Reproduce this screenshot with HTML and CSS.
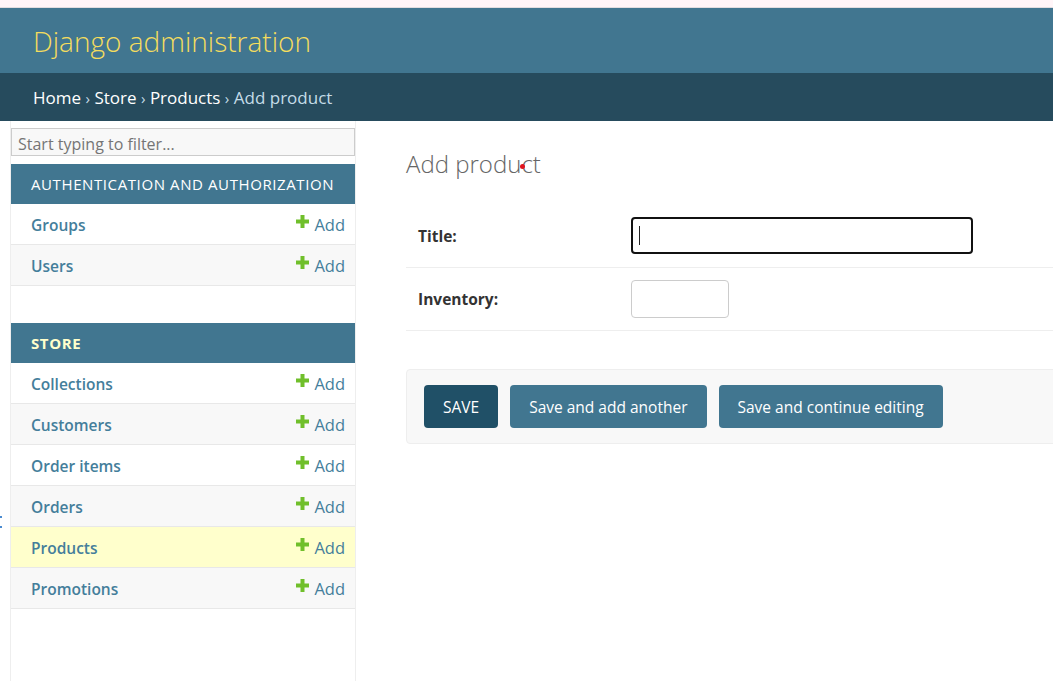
FILE: index.html
```html
<!DOCTYPE html>
<html lang="en">
<head>
<meta charset="utf-8">
<title>Add product | Django site admin</title>
<link rel="stylesheet" href="styles.css">
</head>
<body>
<div class="topstrip"></div>
<header class="header">
  <div class="branding">Django administration</div>
</header>
<nav class="breadcrumbs">
  <a href="#">Home</a> <span class="sep">›</span> <a href="#">Store</a> <span class="sep">›</span> <a href="#">Products</a> <span class="sep">›</span> <span class="current">Add product</span>
</nav>
<div class="main">
  <div class="toggle"><svg class="toggle-glyph" viewBox="0 0 4 14"><rect x="0" y="0" width="2" height="2"/><rect x="0" y="10" width="2" height="2"/></svg></div>
  <aside class="sidebar">
    <input class="nav-filter" type="search" placeholder="Start typing to filter...">
    <section class="module">
      <div class="caption">Authentication and Authorization</div>
      <div class="row row-a"><a class="model" href="#">Groups</a><a class="addlink" href="#"><svg class="plus" viewBox="0 0 13 13"><path d="M4.5 0h4v4.5h4.5v4h-4.5v4.5h-4v-4.5h-4.5v-4h4.5z"/></svg>Add</a></div>
      <div class="row row-b"><a class="model" href="#">Users</a><a class="addlink" href="#"><svg class="plus" viewBox="0 0 13 13"><path d="M4.5 0h4v4.5h4.5v4h-4.5v4.5h-4v-4.5h-4.5v-4h4.5z"/></svg>Add</a></div>
    </section>
    <section class="module current-app">
      <div class="caption">Store</div>
      <div class="row row-a"><a class="model" href="#">Collections</a><a class="addlink" href="#"><svg class="plus" viewBox="0 0 13 13"><path d="M4.5 0h4v4.5h4.5v4h-4.5v4.5h-4v-4.5h-4.5v-4h4.5z"/></svg>Add</a></div>
      <div class="row row-b"><a class="model" href="#">Customers</a><a class="addlink" href="#"><svg class="plus" viewBox="0 0 13 13"><path d="M4.5 0h4v4.5h4.5v4h-4.5v4.5h-4v-4.5h-4.5v-4h4.5z"/></svg>Add</a></div>
      <div class="row row-a"><a class="model" href="#">Order items</a><a class="addlink" href="#"><svg class="plus" viewBox="0 0 13 13"><path d="M4.5 0h4v4.5h4.5v4h-4.5v4.5h-4v-4.5h-4.5v-4h4.5z"/></svg>Add</a></div>
      <div class="row row-b"><a class="model" href="#">Orders</a><a class="addlink" href="#"><svg class="plus" viewBox="0 0 13 13"><path d="M4.5 0h4v4.5h4.5v4h-4.5v4.5h-4v-4.5h-4.5v-4h4.5z"/></svg>Add</a></div>
      <div class="row row-current"><a class="model" href="#">Products</a><a class="addlink" href="#"><svg class="plus" viewBox="0 0 13 13"><path d="M4.5 0h4v4.5h4.5v4h-4.5v4.5h-4v-4.5h-4.5v-4h4.5z"/></svg>Add</a></div>
      <div class="row row-b"><a class="model" href="#">Promotions</a><a class="addlink" href="#"><svg class="plus" viewBox="0 0 13 13"><path d="M4.5 0h4v4.5h4.5v4h-4.5v4.5h-4v-4.5h-4.5v-4h4.5z"/></svg>Add</a></div>
    </section>
  </aside>
  <main class="content">
    <h1 class="title">Add produ<span class="cursor-dot-wrap">c<span class="cursor-dot"></span></span>t</h1>
    <form class="form">
      <div class="form-row">
        <label class="required" for="id_title">Title:</label>
        <div class="field">
          <input class="input input-title" id="id_title" type="text">
          <span class="caret"></span>
        </div>
      </div>
      <div class="form-row">
        <label class="required" for="id_inventory">Inventory:</label>
        <input class="input input-inventory" id="id_inventory" type="text">
      </div>
      <div class="submit-row">
        <button class="btn btn-default" type="button">SAVE</button>
        <button class="btn" type="button">Save and add another</button>
        <button class="btn" type="button">Save and continue editing</button>
      </div>
    </form>
  </main>
</div>
</body>
</html>
```
FILE: styles.css
```css
* { box-sizing: border-box; }
html, body { margin: 0; padding: 0; }
body {
  width: 1053px;
  height: 681px;
  overflow: hidden;
  background: #fff;
  font-family: "Open Sans", "Noto Sans", sans-serif;
  color: #333;
  font-size: 16px;
}
a { text-decoration: none; }

.topstrip {
  height: 8px;
  background: #fff5f8;
  border-bottom: 1px solid #e2dde0;
}

.header {
  height: 65px;
  background: #417690;
  display: flex;
  align-items: center;
  padding-left: 33px;
}
.branding {
  color: #f5dd5d;
  font-size: 28px;
  font-weight: 300;
  line-height: 1;
  margin-top: 1px;
}

.breadcrumbs {
  height: 48px;
  background: #264b5d;
  padding: 13px 0 0 33px;
  line-height: 24px;
  font-size: 17px;
  color: #c4dce8;
}
.breadcrumbs a { color: #fff; }
.breadcrumbs .sep { font-size: 15px; color: #c4dce8; }
.breadcrumbs .current { color: #c4dce8; }

.main {
  display: flex;
  height: 560px;
}

.toggle {
  flex: 0 0 11px;
  border-right: 1px solid #eee;
  overflow: hidden;
}
.toggle-glyph {
  display: block;
  width: 4px;
  height: 14px;
  margin-top: 395px;
  fill: #4b8bd0;
}

.sidebar {
  flex: 0 0 345px;
  border-right: 1px solid #eee;
  padding-top: 7px;
}
.nav-filter {
  display: block;
  width: 100%;
  height: 28px;
  margin: 0 0 8px;
  padding: 3px 6px 0;
  border: 1px solid #ccc;
  background: #f8f8f8;
  font-family: inherit;
  font-size: 16px;
  color: #333;
  outline: none;
}
.nav-filter::placeholder { color: #757575; }

.module {
  margin-bottom: 37px;
}
.caption {
  height: 40px;
  display: flex;
  align-items: center;
  padding: 0 20px;
  background: #417690;
  color: #fff;
  text-transform: uppercase;
  font-size: 15px;
  letter-spacing: 0.6px;
}
.current-app .caption {
  color: #ffc;
  font-weight: 700;
}
.row {
  height: 41px;
  display: flex;
  align-items: center;
  justify-content: space-between;
  padding: 1px 10px 0 20px;
  border-bottom: 1px solid #e8e8e8;
}
.row-a { background: #fff; }
.row-b { background: #f8f8f8; }
.row-current { background: #ffc; }
.model {
  color: #447e9b;
  font-weight: 600;
  font-size: 15.5px;
}
.addlink {
  color: #447e9b;
  font-size: 16.5px;
  display: flex;
  align-items: center;
}
.plus {
  width: 13px;
  height: 13px;
  fill: #70bf2b;
  margin-right: 5px;
  margin-top: -7px;
}

.content {
  flex: 0 0 auto;
  width: 760px;
  padding: 25px 0 0 50px;
}
.title {
  margin: 0 0 23px;
  font-size: 24px;
  font-weight: 300;
  line-height: 36px;
  color: #666;
}
.cursor-dot-wrap { position: relative; }
.cursor-dot {
  position: absolute;
  left: -1px;
  top: 17px;
  width: 5px;
  height: 5px;
  border-radius: 50%;
  background: #e0141e;
}

.form-row {
  display: flex;
  align-items: center;
  height: 63px;
  padding: 0 12px;
  border-bottom: 1px solid #eee;
}
.form-row label {
  flex: 0 0 213px;
  font-weight: 700;
  font-size: 15.5px;
  color: #333;
}
.field {
  position: relative;
  display: flex;
}
.input {
  height: 38px;
  border: 1px solid #ccc;
  border-radius: 4px;
  background: #fff;
  font-family: inherit;
  font-size: 16px;
  padding: 5px 7px;
  outline: none;
}
.input-title {
  width: 342px;
  height: 37px;
  border: 2px solid #111;
  margin-top: -2px;
}
.caret {
  position: absolute;
  left: 8px;
  top: 7px;
  width: 1px;
  height: 19px;
  background: #222;
}
.input-inventory { width: 98px; }

.submit-row {
  margin-top: 38px;
  display: flex;
  gap: 12px;
  padding: 15px 17px;
  background: #f8f8f8;
  border: 1px solid #eee;
  border-radius: 4px;
}
.btn {
  height: 43px;
  padding: 0 19px;
  border: 0;
  border-radius: 4px;
  background: #417690;
  color: #fff;
  font-family: inherit;
  font-size: 15.5px;
}
.btn-default { background: #205067; }
```
